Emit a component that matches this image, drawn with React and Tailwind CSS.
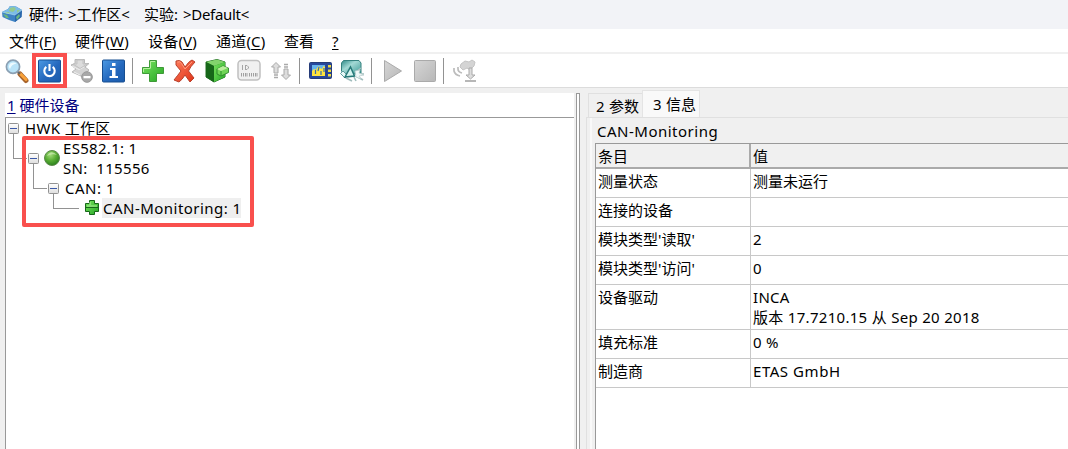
import React from "react";

const Svg = ({ className = "", children, w = 26, h = 26 }) => (
  <svg className={`shrink-0 ${className}`} width={w} height={h} viewBox={`0 0 ${w} ${h}`} fill="none">
    {children}
  </svg>
);

const Key = ({ children }) => <span className="underline underline-offset-2">{children}</span>;

const AppIcon = () => (
  <Svg className="ml-px" w={22} h={20}>
    <path d="M1 8 L7 5 L9 2 L15 2.5 L21 6 L20.5 13 L14 18 L8 16 L1.5 13Z" fill="#3f83c4" />
    <path d="M1 8 L7 5 L9 2 L15 2.5 L21 6 L14 11Z" fill="#7cbce6" />
    <path d="M14 11 L21 6 L20.5 13 L14 18Z" fill="#2b67ab" />
    <path d="M9 4 L13 3 L15 5 L12 8 L8 7Z M4 8 L8 8 L9 10 L5 9.5Z M16 6 L19 6 L16 9Z" fill="#93c98f" />
    <path d="M2 10 L6 11 L8 14 L5 14Z M15 13 L18 10 L19 12 L16 16Z" fill="#6ab67f" />
    <path d="M1 8 L14 11 L21 6" stroke="#a7d8f1" strokeWidth=".7" />
  </Svg>
);

const SearchIcon = () => (
  <Svg className="ml-1">
    <path d="M16 16 L22 22.5" stroke="#a8642c" strokeWidth="5" strokeLinecap="round" />
    <path d="M16.5 16 L22 21.5" stroke="#f9a23a" strokeWidth="3" strokeLinecap="round" />
    <path d="M13.5 13.5 L16 16" stroke="#666" strokeWidth="2" />
    <circle cx="9" cy="8.8" r="6.6" fill="#b9e3f8" stroke="#8ba0b3" strokeWidth="1.7" />
    <path d="M4.8 9 C5 4 10 3.5 12.5 5.5 C9 6 7 8 6 11Z" fill="#ecfaff" />
  </Svg>
);

const PowerIcon = () => (
  <Svg>
    <rect x="1.5" y="2" width="22" height="22" rx="1" fill="url(#blue)" stroke="#174e91" />
    <path d="M9.3 8.8 A5.2 5.2 0 1 0 15.7 8.8" stroke="#fff" strokeWidth="2.1" />
    <path d="M12.5 6 V13" stroke="#fff" strokeWidth="2.1" />
  </Svg>
);

const DisabledLayers = () => (
  <Svg>
    <path d="M6 1.5 H15.5 V5.5 H20 L16 9 L20 12 L13 18.5 L3 14 L7 11 L2 7 L6 5.5Z" fill="#d3d3d3" stroke="#b8b8b8" />
    <path d="M3 8 L10 11.5 L15 9 M5 14 L11 17" stroke="#f0f0f0" />
    <path d="M8 2 V6 H4 L11 10.5 L18 6 H14 V2Z" fill="#dcdcdc" stroke="#c2c2c2" />
    <circle cx="18" cy="19" r="5.3" fill="#a8a8a8" stroke="#989898" />
    <rect x="14.5" y="18" width="7" height="2.3" fill="#fff" />
  </Svg>
);

const InfoIcon = () => (
  <Svg>
    <rect x="1.5" y="2" width="22" height="22" rx="1" fill="url(#blue)" stroke="#174e91" />
    <path d="M11 5 H14.5 V8 H11Z M9 10 H14.5 V18 H17 V20 H8.5 V18 H11 V12 H9Z" fill="#fff" />
  </Svg>
);

const PlusIcon = () => (
  <Svg>
    <path d="M9.5 2.5 H16.5 V9.5 H23.5 V15.5 H16.5 V23.5 H9.5 V15.5 H2.5 V9.5 H9.5Z" fill="url(#green)" stroke="#3f9a38" />
    <path d="M10.5 10.5 V3.5 H15 M3.5 14 V10.5 H10" stroke="#b5f09d" />
  </Svg>
);

const DeleteIcon = () => (
  <Svg>
    <path d="M4 3 Q8 1.5 10 4 L13 9 Q17 3 20 2 L23 4 Q18 9 16.5 13 L22 20 L18 24 L13 17 Q10 22 7 24 L2 22 Q6 17 9 13 L4 7Z" fill="url(#red)" stroke="#b9402b" strokeLinejoin="round" />
    <path d="M5.5 4 Q8 3 9.5 5.5 L13 11 L20 4" stroke="#ff997c" />
  </Svg>
);

const ModuleIcon = () => (
  <Svg>
    <path d="M2 4 L13 1.5 L21 4 V19 L10 24 L2 19Z" fill="#2b9629" stroke="#236d25" strokeLinejoin="round" />
    <path d="M2 4 L13 1.5 L21 4 L10 8Z" fill="#83d46d" />
    <path d="M2 4 L10 8 V24 L2 19Z" fill="#176719" />
    <path d="M10 8 L21 4 V19 L10 24Z" fill="url(#green)" />
    <path d="M13 11 L19 8 L24.5 10 V14.5 L17 18 L13 16Z" fill="#70d557" stroke="#237c25" strokeWidth=".8" />
    <path d="M13 11 L19 8 L24 10 L17 13Z" fill="#b9ed9b" />
    <path d="M17 13 V17.5" stroke="#269129" />
  </Svg>
);

const IdIcon = () => (
  <Svg>
    <rect x="2" y="2.5" width="22" height="19.5" rx="3.5" fill="#f0f0f0" stroke="#c0c0c0" strokeWidth="1.5" />
    <path d="M6.5 7 V12 M9.5 7 V12 M9.5 7.5 H11 L12.5 9 V10 L11 11.5 H9.5" stroke="#a5a5a5" />
    <path d="M5.5 15 V18.5 M7.5 15 V18.5 M9.5 15 V18.5 M11 15 V18.5 M13.5 15 V18.5 M15.5 15 V18.5 M17.5 15 V18.5 M19.5 15 V18.5 M21 15 V18.5" stroke="#a0a0a0" />
  </Svg>
);

const SwapIcon = () => (
  <Svg>
    <path d="M8 4.5 L12.5 9 H10 V15 H6 V9 H3.5Z M16 11 H20 V17 H22.5 L18 21.5 L13.5 17 H16Z" fill="#ddd" stroke="#aaa" />
    <path d="M6 17 H10 M6 19.5 H10 M16 6.5 H20 M16 9 H20" stroke="#aaa" strokeWidth="1.5" />
  </Svg>
);

const ScopeIcon = () => (
  <Svg>
    <rect x="2.5" y="4.5" width="22" height="16" rx="1" fill="#26479c" stroke="#263c78" />
    <rect x="5" y="7" width="13" height="11" fill="#ffe33d" />
    <path d="M5 7 H18 V9 L16.5 8 L15 11 L13 10 L12 8 L10 10 L9 12 L7 11 L5 13Z" fill="#66b3ec" />
    <path d="M8.5 12 V16 M12 9 L11 13 M14 13 V17 M17 10 V14" stroke="#376cad" strokeWidth="1.2" />
    <path d="M19.5 5 V20" stroke="#2b438a" />
    <path d="M21 7 H24 V9.5 H21Z M21 11.5 H24 V14 H21Z M21 16 H24 V18.5 H21Z" fill="#eeda40" />
  </Svg>
);

const CalibrateIcon = () => (
  <Svg>
    <path d="M4.5 2.5 H20 L22 5 V16 H5 L2.5 13 V5Z" fill="url(#teal)" stroke="#35817f" />
    <path d="M1.5 15.5 L4 13 L9 18 L6 20Z" fill="#e8f8f7" stroke="#5c9d9d" />
    <path d="M6 19 L11.5 9 L15.5 18Z" fill="#d6f4f0" stroke="#267978" strokeWidth="1.5" />
    <path d="M7 20 L13 23 M17 14 L22 10 M18 16 L25 16 M17 18 L24 22 M15 19 L17 23" stroke="#a2bebe" strokeWidth="1.6" />
    <path d="M16 13 L21 12 L20 15 L25 17 L20 18 L22 21 L17 19Z" fill="#f1f8f8" stroke="#b4caca" strokeWidth=".7" />
  </Svg>
);

const PlayIcon = () => (
  <Svg><path d="M5.5 2.5 L22.5 13 L5.5 23.5Z" fill="url(#grey)" stroke="#aaa" strokeLinejoin="round" /></Svg>
);
const StopIcon = () => (
  <Svg><rect x="3.5" y="2.5" width="21" height="21" rx="1" fill="url(#grey)" stroke="#aaa" /></Svg>
);
const SignalIcon = () => (
  <Svg>
    <path d="M10 6 L14 3 L18 4 L21 2 L24 4 L23 8 L19 12 L16 10 L12 12 L9 9Z" fill="#d4d4d4" stroke="#c4c4c4" />
    <path d="M3 10 V13 Q4 17 9 18 M7 9 V11 Q7 14 11 15" stroke="#bcbcbc" strokeWidth="1.7" />
    <path d="M18 10 H21 V17 H24 L19.5 21 L15 17 H18Z" fill="#ddd" stroke="#aaa" />
    <path d="M14 23 H25" stroke="#aaa" strokeWidth="1.7" />
  </Svg>
);

const Separator = () => <div className="h-[26px] w-px bg-[#929292]" />;

const Defs = () => (
  <svg width="0" height="0" className="absolute">
    <defs>
      <linearGradient id="blue" x1="0" y1="0" x2="1" y2="1"><stop stopColor="#4c9ae4" /><stop offset=".55" stopColor="#2468bd" /><stop offset="1" stopColor="#1b5baa" /></linearGradient>
      <linearGradient id="green" x1="0" y1="0" x2="1" y2="1"><stop stopColor="#79e45f" /><stop offset="1" stopColor="#25a625" /></linearGradient>
      <linearGradient id="red" x1="0" y1="0" x2="1" y2="1"><stop stopColor="#ff8060" /><stop offset="1" stopColor="#dd3015" /></linearGradient>
      <linearGradient id="grey" x1="0" y1="0" x2="1" y2="1"><stop stopColor="#d6d6d6" /><stop offset="1" stopColor="#b7b7b7" /></linearGradient>
      <linearGradient id="teal" x1="0" y1="0" x2="1" y2="1"><stop stopColor="#2d8986" /><stop offset=".4" stopColor="#a3d9d5" /><stop offset="1" stopColor="#3c9995" /></linearGradient>
      <linearGradient id="box" x1="0" y1="0" x2="0" y2="1"><stop stopColor="#fff" /><stop offset="1" stopColor="#dedede" /></linearGradient>
      <radialGradient id="ball" cx=".4" cy=".3" r=".75"><stop stopColor="#a2dc78" /><stop offset=".5" stopColor="#59ad35" /><stop offset="1" stopColor="#257c18" /></radialGradient>
    </defs>
  </svg>
);

const Toggle = () => (
  <Svg w={11} h={11}>
    <rect x=".5" y=".5" width="10" height="10" rx="1" fill="url(#box)" stroke="#929292" />
    <path d="M2 5.5 H9" stroke="#3b58a8" />
  </Svg>
);

const Row = ({ name, value, className = "h-[29px]", valueClass = "" }) => (
  <div className={`flex border-b border-[#c8c8c8] leading-5 ${className}`}>
    <div className="w-[155px] border-r border-[#c8c8c8] pl-0.5 pt-[2px]">{name}</div>
    <div className={`pl-0.5 pt-[2px] ${valueClass}`}>{value}</div>
  </div>
);

export default function App() {
  return (
    <div className="flex h-[449px] w-[1068px] flex-col overflow-hidden whitespace-pre bg-[#f0f0f0] font-['Noto_Sans','Noto_Sans_CJK_SC',sans-serif] text-[15px] leading-5 text-black">
      <Defs />
      <header className="flex h-[29px] shrink-0 items-center bg-[#f2f3f7] pb-0.5">
        <AppIcon />
        <span className="ml-1.5 w-[39px]">硬件:</span>
        <span className="w-[76px] tracking-[-0.1px]">&gt;工作区&lt;</span>
        <span className="w-[39px]">实验:</span>
        <span className="tracking-[-0.3px]">&gt;Default&lt;</span>
      </header>
      <nav className="flex h-[23px] shrink-0 items-center bg-white pl-[9px]">
        <span className="w-[66px] tracking-[0.1px]">文件(<Key>F</Key>)</span>
        <span className="w-[73px] tracking-[0.2px]">硬件(<Key>W</Key>)</span>
        <span className="w-[68px] tracking-[0.2px]">设备(<Key>V</Key>)</span>
        <span className="w-[68px] tracking-[0.2px]">通道(<Key>C</Key>)</span>
        <span className="w-12">查看</span>
        <Key>?</Key>
      </nav>
      <div className="flex h-9 shrink-0 items-center border-b border-t-2 border-b-[#dcdcdc] border-t-[#f0f0f0] bg-white">
        <SearchIcon />
        <div className="z-10 ml-0.5 flex h-[35px] w-[35px] shrink-0 items-center justify-center border-4 border-[#f9504d]"><PowerIcon /></div>
        <div className="ml-0.5 flex gap-[6px]"><DisabledLayers /><InfoIcon /></div>
        <div className="ml-[5px]"><Separator /></div>
        <div className="ml-[7px] flex gap-[6px]"><PlusIcon /><DeleteIcon /><ModuleIcon /><IdIcon /><SwapIcon /></div>
        <div className="ml-[5px]"><Separator /></div>
        <div className="ml-[7px] flex gap-[6px]"><ScopeIcon /><CalibrateIcon /></div>
        <div className="ml-[6px]"><Separator /></div>
        <div className="ml-[7px] flex gap-[6px]"><PlayIcon /><StopIcon /></div>
        <div className="ml-[6px]"><Separator /></div>
        <div className="ml-[7px]"><SignalIcon /></div>
      </div>
      <main className="flex min-h-0 flex-1">
        <section className="ml-[5px] mt-[5px] flex w-[569px] shrink-0 flex-col bg-white">
          <h2 className="h-6 pl-[2px] pt-[2px] text-[#000080]"><Key>1</Key> 硬件设备</h2>
          <div className="relative flex-1 border-l border-t border-[#999]">
            <div className="flex h-5 items-center pl-[2px]"><Toggle /><span className="ml-[6px] tracking-[0.35px]">HWK 工作区</span></div>
            <div className="flex h-10">
              <div className="ml-[7px] mt-[-4px] h-[25px] w-[14px] border-b border-l border-[#929292]" />
              <div className="ml-px mt-[15px]"><Toggle /></div>
              <Svg className="ml-[4px] mt-[11px]" w={18} h={18}>
                <circle cx="9" cy="9" r="7.5" fill="url(#ball)" stroke="#5c8a4c" />
                <path d="M4 7 Q8 0 14 6 Q9 4 4 7" fill="#d1edb9" opacity=".7" />
              </Svg>
              <div className="ml-[2px] leading-5"><div className="tracking-[0.3px]">ES582.1: 1</div><div className="tracking-[0.35px]">SN:  115556</div></div>
            </div>
            <div className="flex h-5">
              <div className="ml-[27px] mt-[-14px] h-[25px] w-[14px] border-b border-l border-[#929292]" />
              <div className="ml-px mt-[5px]"><Toggle /></div>
              <span className="ml-[6px] tracking-[0.5px]">CAN: 1</span>
            </div>
            <div className="flex h-5">
              <div className="ml-[47px] mt-[-4px] h-[15px] w-[26px] border-b border-l border-[#929292]" />
              <Svg className="ml-[5px] mt-[1px]" w={16} h={17}>
                <path d="M5.5 1.5 H10.5 V4.5 H14.5 V12.5 H10.5 V15.5 H5.5 V12.5 H1.5 V4.5 H5.5Z" fill="url(#green)" stroke="#17681a" />
                <path d="M1 8.5 H15" stroke="#17681a" /><path d="M3 7 H13 M6 3 V6" stroke="#aff29b" />
              </Svg>
              <span className="ml-[2px] w-[139px] bg-[#efefef] pl-px tracking-[0.47px]">CAN-Monitoring: 1</span>
            </div>
            <div className="absolute left-[16px] top-[18px] h-[91px] w-[232px] rounded-[2px] border-4 border-[#f9504d]" />
          </div>
        </section>
        <div className="ml-[2px] mt-[5px] w-1 border-x border-t border-[#999] bg-white" />
        <section className="ml-[6px] flex min-w-0 flex-1 flex-col">
          <div className="flex h-[29px] items-end pl-[2px]">
            <div className="h-[24px] w-[54px] border-l border-t border-[#e0e0e0] pl-[7px] pt-[2px] tracking-[0.2px]">2 参数</div>
            <div className="h-[27px] w-[58px] border border-b-0 border-[#e4e4e4] bg-[#f9f9f9] pl-[10px] pt-[3px] tracking-[0.2px]">3 信息</div>
          </div>
          <div className="flex flex-1 flex-col border-l border-t border-[#e0e0e0] pl-[3px]">
            <div className="flex flex-1 flex-col border-l-2 border-[#f9f9f9] pl-[3px]">
              <h3 className="h-[25px] pl-[2px] pt-[3px] tracking-[0.5px]">CAN-Monitoring</h3>
              <div className="flex-1 border-l border-t border-[#999] bg-white">
                <div className="flex h-[25px] border-b-2 border-[#aaa] bg-[#f0f0f0]">
                  <div className="w-[155px] border-r-2 border-[#aaa] pl-0.5 pt-[2px]">条目</div><div className="pl-0.5 pt-[2px]">值</div>
                </div>
                <Row name="测量状态" value="测量未运行" />
                <Row name="连接的设备" value="" />
                <Row name="模块类型'读取'" value="2" />
                <Row name="模块类型'访问'" value="0" />
                <Row name="设备驱动" value={"INCA\n版本 17.7210.15 从 Sep 20 2018"} className="h-[45px]" valueClass="tracking-[0.3px]" />
                <Row name="填充标准" value="0 %" valueClass="tracking-[0.3px]" />
                <Row name="制造商" value="ETAS GmbH" valueClass="tracking-[0.55px]" />
              </div>
            </div>
          </div>
        </section>
      </main>
    </div>
  );
}
